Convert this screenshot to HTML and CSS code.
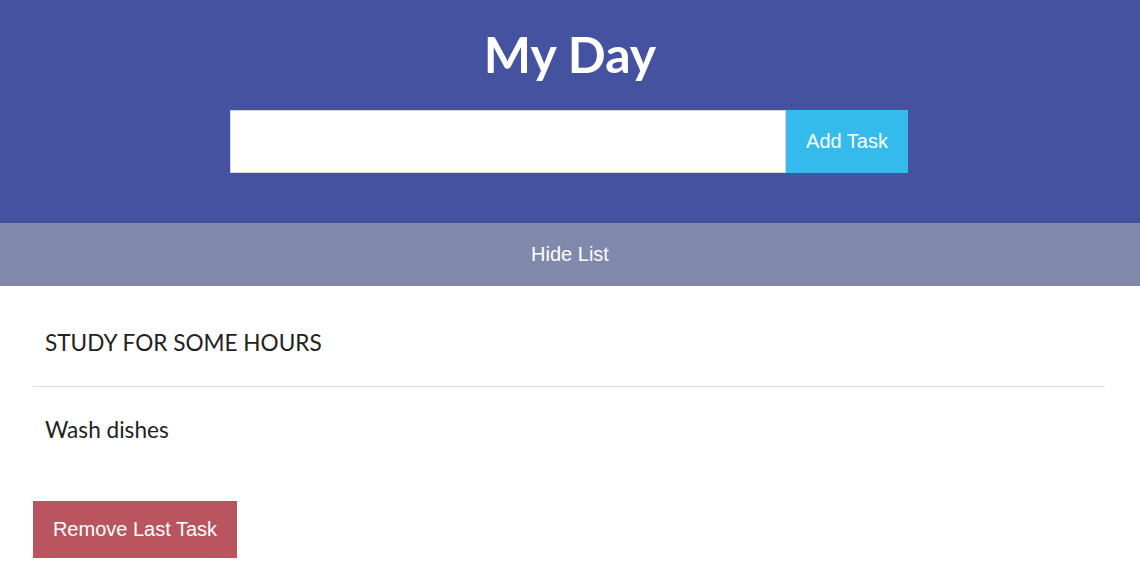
FILE: index.html
```html
<!DOCTYPE html>
<html>
<head>
<meta charset="utf-8">
<link rel="stylesheet" href="styles.css">
</head>
<body>
<header class="header">
  <h1 class="title">My Day</h1>
  <form class="add-form">
    <input class="task-input" type="text">
    <button class="add-btn" type="button">Add Task</button>
  </form>
</header>
<button class="toggle-btn" type="button">Hide List</button>
<main class="content">
  <ul class="task-list">
    <li class="task">STUDY FOR SOME HOURS</li>
    <li class="task">Wash dishes</li>
  </ul>
  <button class="remove-btn" type="button">Remove Last Task</button>
</main>
</body>
</html>
```
FILE: styles.css
```css
* { box-sizing: border-box; }
html, body { margin: 0; padding: 0; background: #fff; }
body { font-family: Lato, "Liberation Sans", sans-serif; }
.header {
  background: #44529f;
  height: 223px;
  padding-top: 24px;
  display: flex;
  flex-direction: column;
  align-items: center;
}
.title {
  margin: 0;
  color: #fff;
  font-family: Lato, sans-serif;
  font-weight: 700;
  font-size: 50px;
  line-height: 60px;
}
.add-form {
  margin-top: 26px;
  margin-right: 2px;
  display: flex;
}
.task-input {
  width: 556px;
  height: 63px;
  border: 1px solid #d6d6d6;
  background: #fff;
  margin: 0;
  padding: 0 10px;
  font-size: 20px;
  outline: none;
}
.add-btn {
  width: 122px;
  height: 63px;
  border: none;
  margin: 0;
  background: #35baec;
  color: #fff;
  font-family: "Liberation Sans", Arial, sans-serif;
  font-size: 20px;
}
.toggle-btn {
  display: block;
  width: 100%;
  height: 63px;
  border: none;
  margin: 0;
  background: #8088ac;
  color: #fff;
  font-family: "Liberation Sans", Arial, sans-serif;
  font-size: 20px;
}
.content {
  padding: 14px 35px 0 33px;
}
.task-list {
  list-style: none;
  margin: 0;
  padding: 0;
}
.task {
  padding: 30px 12px;
  font-family: Lato, sans-serif;
  font-size: 22.6px;
  line-height: 26px;
  color: #222;
  border-bottom: 1px solid #dddddd;
}
.task:last-child { border-bottom: none; }
.remove-btn {
  margin-top: 28px;
  width: 204px;
  height: 57px;
  border: none;
  background: #b9555f;
  color: #fff;
  font-family: "Liberation Sans", Arial, sans-serif;
  font-size: 20px;
}
```
